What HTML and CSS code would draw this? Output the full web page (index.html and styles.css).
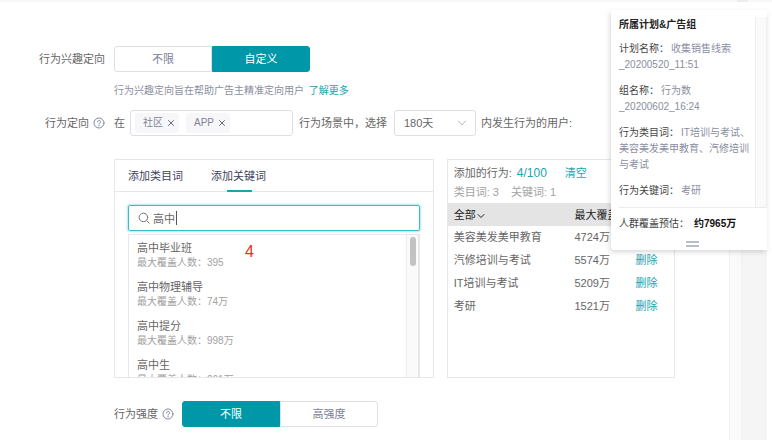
FILE: index.html
```html
<!DOCTYPE html>
<html lang="zh-CN">
<head>
<meta charset="utf-8">
<title>行为兴趣定向</title>
<link rel="stylesheet" href="styles.css">
</head>
<body>
<div class="topbar"><span class="topbar-end"></span></div>
<div class="page">
  <main class="main">
    <div class="row">
      <div class="label">行为兴趣定向</div>
      <div class="segment" role="group" aria-label="行为兴趣定向">
        <button type="button">不限</button><button type="button" class="on">自定义</button>
      </div>
    </div>
    <p class="hint">行为兴趣定向旨在帮助广告主精准定向用户 <a href="#more">了解更多</a></p>
    <div class="row">
      <div class="label">行为定向
        <svg class="help" viewBox="0 0 12 12" aria-hidden="true"><circle cx="6" cy="6" r="5"/><path d="M4.5 4.9a1.5 1.5 0 1 1 2.3 1.2c-.5.3-.8.5-.8 1M6 8.3v.7"/></svg>
      </div>
      <span class="scene">在</span>
      <div class="tags">
        <span class="tag">社区<button type="button" aria-label="移除社区"><svg viewBox="0 0 8 8"><path d="M1.5 1.5l5 5M6.5 1.5l-5 5"/></svg></button></span>
        <span class="tag">APP<button type="button" aria-label="移除APP"><svg viewBox="0 0 8 8"><path d="M1.5 1.5l5 5M6.5 1.5l-5 5"/></svg></button></span>
      </div>
      <label class="between" for="days">行为场景中，选择</label>
      <span class="select">
        <select id="days"><option>180天</option></select>
        <svg viewBox="0 0 10 10" aria-hidden="true"><path d="M1.5 3l3.5 4 3.5-4"/></svg>
      </span>
      <span class="after">内发生行为的用户:</span>
    </div>

    <div class="boxes">
      <section class="box picker">
        <div class="tabs">
          <button type="button">添加类目词</button>
          <button type="button" class="active">添加关键词</button>
        </div>
        <div class="picker-body">
          <div class="search">
            <svg viewBox="0 0 12 12" aria-hidden="true"><circle cx="5.4" cy="5.4" r="4.3"/><path d="M8.6 8.6l2.6 2.6"/></svg>
            <input type="text" value="高中" aria-label="搜索关键词"><span class="caret"></span>
          </div>
          <div class="results">
            <ul>
              <li><b>高中毕业班</b><small>最大覆盖人数：395</small></li>
              <li><b>高中物理辅导</b><small>最大覆盖人数：74万</small></li>
              <li><b>高中提分</b><small>最大覆盖人数：998万</small></li>
              <li><b>高中生</b><small>最大覆盖人数：261万</small></li>
            </ul>
            <div class="track"><span class="thumb"></span></div>
          </div>
        </div>
        <span class="mark">4</span>
      </section>

      <section class="box chosen">
        <div class="summary">
          <div class="total">添加的行为: <span class="count">4/100</span><button type="button" class="link">清空</button></div>
          <div class="detail"><span>类目词: 3</span><span>关键词: 1</span></div>
        </div>
        <table>
          <thead>
            <tr><th class="name">全部<svg viewBox="0 0 8 8" aria-hidden="true"><path d="M1 2.5l3 3 3-3"/></svg></th><th class="cover">最大覆盖</th><th></th></tr>
          </thead>
          <tbody>
            <tr><td>美容美发美甲教育</td><td>4724万</td><td><button type="button" class="link">删除</button></td></tr>
            <tr><td>汽修培训与考试</td><td>5574万</td><td><button type="button" class="link">删除</button></td></tr>
            <tr><td>IT培训与考试</td><td>5209万</td><td><button type="button" class="link">删除</button></td></tr>
            <tr><td>考研</td><td>1521万</td><td><button type="button" class="link">删除</button></td></tr>
          </tbody>
        </table>
      </section>
    </div>

    <div class="row strength">
      <span class="strength-label">行为强度
        <svg class="help" viewBox="0 0 12 12" aria-hidden="true"><circle cx="6" cy="6" r="5"/><path d="M4.5 4.9a1.5 1.5 0 1 1 2.3 1.2c-.5.3-.8.5-.8 1M6 8.3v.7"/></svg>
      </span>
      <div class="segment" role="group" aria-label="行为强度">
        <button type="button" class="on">不限</button><button type="button">高强度</button>
      </div>
    </div>
  </main>
  <div class="gutter"></div>
  <div class="margin"></div>
</div>

<aside class="float">
  <div class="float-scroll">
    <div class="float-info">
      <h2>所属计划&amp;广告组</h2>
      <p><span>计划名称：</span>收集销售线索<wbr>_20200520_11:51</p>
      <p><span>组名称：</span>行为数<br>_20200602_16:24</p>
      <p><span>行为类目词：</span>IT培训与考试、美容美发美甲教育、汽修培训与考试</p>
      <p><span>行为关键词：</span>考研</p>
    </div>
    <div class="float-track"></div>
  </div>
  <div class="estimate">人群覆盖预估：<strong>约7965万</strong></div>
  <div class="handle"></div>
</aside>
</body>
</html>
```

FILE: styles.css
```css
* { box-sizing: border-box; }

body {
  margin: 0;
  min-height: 100vh;
  display: flex;
  flex-direction: column;
  position: relative;
  background: #fff;
  color: #666;
  font: 11px/16px "Liberation Sans", "Noto Sans CJK SC", sans-serif;
}

button, input, select {
  font: inherit;
  color: inherit;
  background: none;
  border: 0;
  margin: 0;
  padding: 0;
}

button { cursor: pointer; }

svg {
  fill: none;
  stroke: currentColor;
  stroke-linecap: round;
  stroke-linejoin: round;
}

a, .link, .count { color: #1aa3b3; text-decoration: none; }

.topbar {
  height: 2px;
  padding-right: 24px;
  display: flex;
  justify-content: flex-end;
  background: #f8f8f8;
}
.topbar-end { width: 11px; background: #ececec; }

.page {
  flex: 1;
  display: flex;
  padding: 0 5px 2px 0;
}
.main { flex: 1; min-width: 0; padding: 44px 54px 13px 0; }
.gutter, .margin { margin-top: 16px; }
.gutter { width: 13px; background: #fafafa; border: solid #f0f0f0; border-width: 0 1px; }
.margin { width: 25px; background: #f5f5f5; }

.row { display: flex; align-items: center; }

.label {
  width: 105px;
  margin-right: 9px;
  display: flex;
  justify-content: flex-end;
  align-items: center;
  gap: 4px;
}
.help { width: 12px; height: 12px; color: #8288a0; stroke-width: 1; }

.segment { display: flex; }
.segment button {
  width: 98px;
  height: 26px;
  border: 1px solid #dfe0e4;
  color: #7b8098;
}
.segment button:first-child { border-radius: 3px 0 0 3px; }
.segment button:last-child { border-radius: 0 3px 3px 0; }
.segment .on { background: #0097a9; border-color: #0097a9; color: #fff; }

.hint {
  margin: 11px 0 11px 114px;
  font-size: 10px;
  color: #8a8ea2;
}
.hint a { margin-left: 2px; }

.scene { width: 16px; }
.tags {
  width: 163px;
  height: 26px;
  padding: 0 4px;
  display: flex;
  align-items: center;
  gap: 7px;
  border: 1px solid #dedfe3;
  border-radius: 3px;
}
.tag {
  height: 20px;
  padding: 0 4px 0 8px;
  display: flex;
  align-items: center;
  gap: 4px;
  border-radius: 3px;
  background: #f7f7f9;
  color: #7e839a;
  font-size: 10px;
}
.tag button { display: flex; }
.tag svg { width: 8px; height: 8px; color: #666b80; }
.between { width: 101px; padding-left: 6px; }
.select { position: relative; width: 82px; height: 26px; }
.select select {
  width: 100%;
  height: 100%;
  padding: 0 9px;
  border: 1px solid #dedfe3;
  border-radius: 3px;
  appearance: none;
}
.select svg {
  position: absolute;
  right: 9px;
  top: 8px;
  width: 10px;
  height: 10px;
  color: #b3b6c2;
  pointer-events: none;
}
.after { padding-left: 5px; }

.boxes {
  display: flex;
  gap: 13px;
  height: 219px;
  margin: 23px 0 23px 114px;
}
.box { border: 1px solid #e6e7eb; overflow: hidden; }
.picker { flex: 320; position: relative; display: flex; flex-direction: column; }
.chosen { flex: 228; }

.tabs {
  height: 32px;
  padding: 0 13px;
  display: flex;
  gap: 28px;
  border-bottom: 1px solid #e6e7eb;
  color: #3e435c;
}
.tabs button { position: relative; }
.tabs .active::after {
  content: "";
  position: absolute;
  left: 16px;
  right: 14px;
  bottom: -1px;
  height: 2px;
  background: #1aa3b3;
}

.picker-body {
  flex: 1;
  min-height: 0;
  padding: 13px 13px 0;
  display: flex;
  flex-direction: column;
  gap: 3px;
}
.search {
  position: relative;
  flex: none;
  height: 26px;
  padding: 0 9px;
  display: flex;
  align-items: center;
  gap: 3px;
  border: 1px solid #3dbcc6;
  border-radius: 2px;
  box-shadow: 0 0 2px 1px #b5e5e9;
}
.search svg { width: 12px; height: 12px; color: #777; }
.search input { flex: 1; min-width: 0; height: 20px; outline: 0; }
.caret { position: absolute; left: 47px; top: 5px; width: 1px; height: 14px; background: #555; }

.results {
  flex: 1;
  min-height: 0;
  display: flex;
  border: 1px solid #e6e7eb;
  border-bottom: 0;
  border-right-width: 2px;
}
.results ul {
  flex: 1;
  margin: 0;
  padding: 5px 8px 0;
  list-style: none;
  overflow: hidden;
}
.results li { height: 39px; }
.results b, .results small { display: block; font-weight: 400; }
.results b { line-height: 16px; }
.results small { font-size: 10px; line-height: 14px; color: #a2a2a2; }
.track {
  width: 12px;
  padding: 2px 2px 0 3px;
  border-left: 1px solid #ececec;
  background: #fafafa;
}
.thumb { display: block; height: 29px; border-radius: 3px; background: #c2c2c2; }

.mark {
  position: absolute;
  left: 130px;
  top: 83px;
  font-size: 16px;
  line-height: 18px;
  color: #ff2a10;
}

.summary { height: 43px; padding: 4px 6px 0; }
.total { line-height: 18px; }
.count { margin-left: 2px; font-size: 12px; }
.total .link { margin-left: 18px; }
.detail { display: flex; gap: 12px; line-height: 20px; color: #a2a2a2; }

table { width: 100%; border-collapse: collapse; table-layout: fixed; }
th, td {
  height: 23px;
  padding: 0;
  text-align: left;
  font-weight: 400;
  white-space: nowrap;
}
td { padding-bottom: 2px; }
th { background: #e4e4e4; color: #222; }
th:first-child, td:first-child { padding-left: 6px; }
.name { width: 56%; }
.cover { width: 27%; }
th svg { width: 8px; height: 8px; vertical-align: middle; margin-left: 1px; }

.strength { padding-left: 114px; }
.strength-label { width: 68px; display: flex; align-items: center; gap: 4px; }

.float {
  position: absolute;
  top: 10px;
  right: 5px;
  width: 156px;
  background: #fff;
  border-radius: 0 0 0 3px;
  box-shadow: -1px 2px 5px rgba(0, 0, 0, .16);
  font-size: 10px;
  color: #8a8ea2;
}
.float-scroll { display: flex; }
.float-info { flex: 1; min-width: 0; padding: 7px 2px 8px 8px; }
.float h2 { margin: 0 0 8px; font-size: 10px; line-height: 16px; color: #222; }
.float p { margin: 0 0 10px; }
.float p:last-child { margin-bottom: 0; }
.float p span { margin-right: 2px; color: #444; }
.float-track { width: 12px; margin-top: 7px; background: #fafafa; border: solid #efefef; border-width: 0 1px; }
.estimate {
  margin-left: 8px;
  padding-top: 8px;
  border-top: 1px solid #ececec;
  color: #444;
}
.estimate strong { margin-left: 5px; color: #111; }
.handle {
  width: 13px;
  height: 6px;
  margin: 9px auto 3px 75px;
  border: solid #b9bccb;
  border-width: 2px 0;
}
```
